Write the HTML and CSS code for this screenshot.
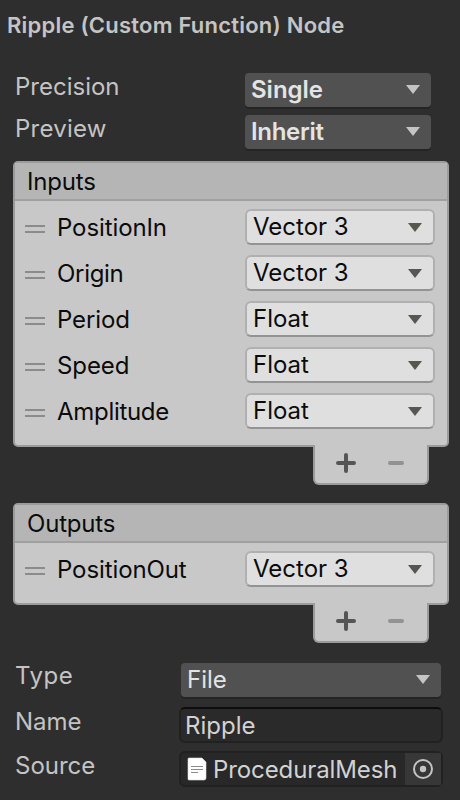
FILE: index.html
```html
<!DOCTYPE html>
<html lang="en">
<head>
<meta charset="utf-8">
<title>Node settings</title>
<link rel="stylesheet" href="styles.css">
</head>
<body>
<main class="inspector">
  <h1 class="title">Ripple (Custom Function) Node</h1>

  <section class="props">
    <div class="prop"><span class="label">Precision</span><div class="dropdown strong"><span>Single</span><i class="arrow"></i></div></div>
    <div class="prop"><span class="label roomy">Preview</span><div class="dropdown strong"><span class="tight">Inherit</span><i class="arrow"></i></div></div>
  </section>

  <section class="list">
    <div class="panel">
      <h2 class="heading">Inputs</h2>
      <div class="row"><i class="grip"></i><span class="name">PositionIn</span><div class="select"><span>Vector 3</span><i class="arrow"></i></div></div>
      <div class="row"><i class="grip"></i><span class="name tight">Origin</span><div class="select"><span>Vector 3</span><i class="arrow"></i></div></div>
      <div class="row"><i class="grip"></i><span class="name">Period</span><div class="select"><span>Float</span><i class="arrow"></i></div></div>
      <div class="row"><i class="grip"></i><span class="name">Speed</span><div class="select"><span>Float</span><i class="arrow"></i></div></div>
      <div class="row"><i class="grip"></i><span class="name tight">Amplitude</span><div class="select"><span>Float</span><i class="arrow"></i></div></div>
    </div>
    <div class="footer">
      <svg class="tools" viewBox="0 0 112 38"><path class="plus" d="M23 18h16M31 10v16"/><path class="minus" d="M75 18h12"/></svg>
    </div>
  </section>

  <section class="list">
    <div class="panel">
      <h2 class="heading">Outputs</h2>
      <div class="row"><i class="grip"></i><span class="name">PositionOut</span><div class="select"><span>Vector 3</span><i class="arrow"></i></div></div>
    </div>
    <div class="footer">
      <svg class="tools" viewBox="0 0 112 38"><path class="plus" d="M23 18h16M31 10v16"/><path class="minus" d="M75 18h12"/></svg>
    </div>
  </section>

  <section class="fields">
    <div class="field type"><span class="label">Type</span><div class="dropdown"><span>File</span><i class="arrow"></i></div></div>
    <div class="field"><span class="label">Name</span><div class="input text"><span>Ripple</span></div></div>
    <div class="field"><span class="label">Source</span>
      <div class="input object">
        <svg class="file" viewBox="0 0 20 24"><path class="sheet" d="M2 1h13l4 4v16a2 2 0 0 1-2 2H2a1 1 0 0 1-1-1V2a1 1 0 0 1 1-1z"/><path class="lines" d="M4 9.5h12M4 12.5h12M4 15.5h7"/></svg>
        <span class="asset">ProceduralMesh</span>
        <div class="picker"><svg viewBox="0 0 36 32"><circle class="ring" cx="18" cy="16" r="9"/><circle class="dot" cx="18" cy="16" r="3.2"/></svg></div>
      </div>
    </div>
  </section>
</main>
</body>
</html>
```

FILE: styles.css
```css
* { box-sizing: border-box; }

body {
  margin: 0;
  background: #2e2e2e;
  color: #c4c4c4;
  font: 24px/34px Inter, "Liberation Sans", sans-serif;
}

.inspector {
  height: 800px;
  overflow: hidden;
  white-space: nowrap;
}

.title {
  height: 73px;
  margin: 0;
  padding: 8px 0 0 7px;
  font-size: 22px;
  font-weight: 600;
  letter-spacing: .22px;
  line-height: 34px;
}

.props {
  display: flex;
  flex-direction: column;
  gap: 8px;
}

.prop {
  display: flex;
  height: 34px;
  padding-left: 15px;
}

.prop .label { width: 230px; line-height: 28px; }
.prop .roomy { letter-spacing: .25px; }
.prop .dropdown { width: 186px; }

.dropdown {
  display: flex;
  align-items: center;
  justify-content: space-between;
  height: 34px;
  padding: 0 11px 0 6px;
  border-radius: 4px;
  background: #515151;
  box-shadow: 0 2px #242424;
  color: #e4e4e4;
}

.strong { font-weight: 600; }

.arrow {
  width: 14px;
  height: 9px;
  margin-top: -1px;
  background: #c4c4c4;
  clip-path: polygon(0 0, 100% 0, 50% 100%);
}

.list { padding: 12px 11px 0 13px; }
.list + .list { padding-top: 18px; }

.panel {
  padding-bottom: 16px;
  border: 2px solid #9b9b9b;
  border-radius: 5px;
  background: #c8c8c8;
  color: #0b0b0b;
}

.heading {
  height: 38px;
  margin: 0;
  padding-left: 12px;
  border-bottom: 2px solid #a0a0a0;
  background: #b5b5b5;
  font-size: 24px;
  font-weight: 400;
  letter-spacing: -.2px;
  line-height: 37px;
}

.row {
  display: flex;
  align-items: center;
  height: 46px;
  padding: 8px 12px 2px 10px;
}

.panel .row:last-child { height: 44px; padding-bottom: 0; }

.grip {
  width: 20px;
  height: 8px;
  margin: 4px 12px 0 0;
  border: solid #8b8b8b;
  border-width: 2px 0;
}

.name { flex: 1; margin-top: 1px; letter-spacing: -.1px; }
.tight { letter-spacing: -.3px; }

.select {
  display: flex;
  align-items: center;
  justify-content: space-between;
  width: 190px;
  height: 36px;
  padding: 0 11px 0 6px;
  border: 2px solid #b0b0b0;
  border-bottom-color: #939393;
  border-radius: 6px;
  background: #dfdfdf;
}

.select .arrow { margin-top: 1px; background: #575751; }

.footer {
  position: relative;
  width: 116px;
  height: 40px;
  margin: -2px 0 0 300px;
  border: 2px solid #9b9b9b;
  border-top: 0;
  border-radius: 0 0 6px 6px;
  background: #c8c8c8;
}

.tools { display: block; width: 112px; height: 38px; }
.plus, .minus { stroke: #555; stroke-width: 4; stroke-linecap: round; }
.minus { stroke: #929292; }

.fields { padding: 20px 17px 0 15px; }
.field { display: flex; height: 44px; }
.field .label { width: 164px; line-height: 29px; }
.field.type .label { width: 166px; line-height: 26px; letter-spacing: .5px; }
.field .dropdown { width: 260px; }

.input {
  display: flex;
  width: 264px;
  height: 36px;
  border: 2px solid #212121;
  border-radius: 6px;
  background: #2a2a2a;
  color: #d2d2d2;
  line-height: 34px;
}

.text { padding-left: 4px; border-top-color: #0d0d0d; }
.object { padding-left: 6px; background: #282828; }
.file { width: 20px; height: 24px; margin: 4px 6px 0 0; }
.sheet { fill: #fff; stroke: #dedede; stroke-width: .6; }
.lines { stroke: #8b8b8b; stroke-width: 1; }
.asset { flex: 1; letter-spacing: -.1px; }
.picker { width: 36px; height: 32px; background: #373737; }
.picker svg { display: block; width: 36px; height: 32px; }
.ring { fill: none; stroke: #c4c4c4; stroke-width: 2; }
.dot { fill: #c4c4c4; }
```
